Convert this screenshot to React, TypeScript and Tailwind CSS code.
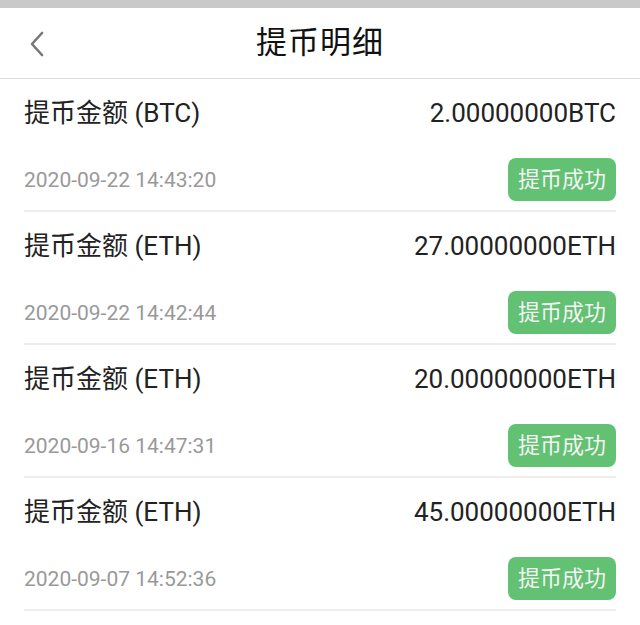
import React from 'react';

const records = [
  { coin: 'BTC', amount: '2.00000000BTC', time: '2020-09-22 14:43:20' },
  { coin: 'ETH', amount: '27.00000000ETH', time: '2020-09-22 14:42:44' },
  { coin: 'ETH', amount: '20.00000000ETH', time: '2020-09-16 14:47:31' },
  { coin: 'ETH', amount: '45.00000000ETH', time: '2020-09-07 14:52:36' },
];

const font = { fontFamily: 'Roboto, "Noto Sans CJK SC", sans-serif' };

const App: React.FC = () => {
  return (
    <div className="w-[640px] h-[625px] bg-white overflow-hidden" style={font}>
      {/* Status bar strip */}
      <div className="h-[8px] bg-[#c9c9c9]" />

      {/* Header */}
      <div className="relative h-[71px] flex items-center justify-center border-b border-[#dcdcdc]">
        <button className="absolute left-[26px] top-[20px] w-[22px] h-[32px] flex items-center justify-center">
          <svg width="16" height="26" viewBox="0 0 16 26" fill="none">
            <path d="M13 2L3 13L13 24" stroke="#777" strokeWidth="2.6" strokeLinecap="round" strokeLinejoin="round" />
          </svg>
        </button>
        <h1 className="text-[31px] text-[#111] leading-none tracking-[1px] -mt-[2px]">提币明细</h1>
      </div>

      {/* List */}
      <div className="px-[24px]">
        {records.map((r, i) => (
          <div key={i} className="h-[133px] border-b-2 border-[#ececec] flex flex-col">
            <div className="flex items-center justify-between pt-[17px]">
              <span className="text-[26px] text-[#222] leading-[34px]">提币金额 ({r.coin})</span>
              <span className="text-[26px] text-[#222] leading-[34px]">{r.amount}</span>
            </div>
            <div className="flex items-center justify-between mt-[28px]">
              <span className="text-[21px] text-[#999] leading-[26px]">{r.time}</span>
              <span className="h-[43px] w-[108px] rounded-[8px] bg-[#62c172] text-[#f4f4f4] text-[22px] flex items-center justify-center">
                提币成功
              </span>
            </div>
          </div>
        ))}
      </div>
    </div>
  );
};

export default App;
